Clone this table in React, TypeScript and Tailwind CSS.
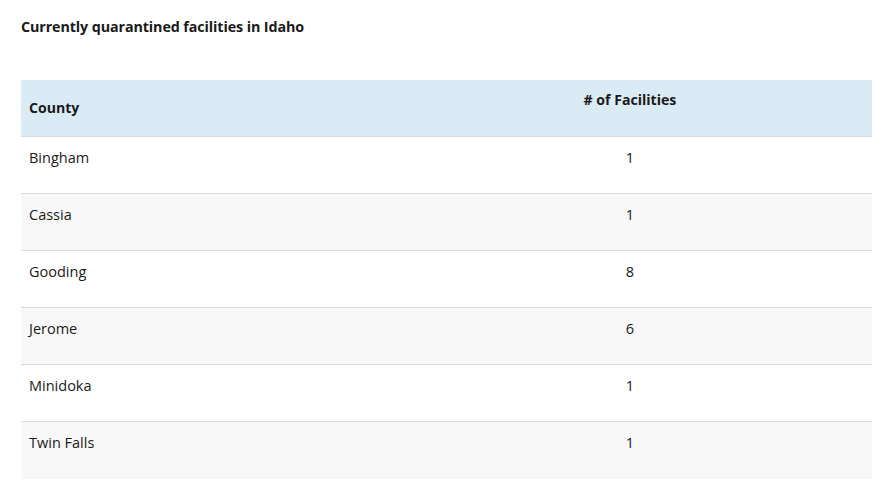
import React from "react";

const rows: [string, string][] = [
  ["Bingham", "1"],
  ["Cassia", "1"],
  ["Gooding", "8"],
  ["Jerome", "6"],
  ["Minidoka", "1"],
  ["Twin Falls", "1"],
];

export default function App() {
  return (
    <div
      className="w-[876px] h-[482px] bg-white text-[#1a1a1a] overflow-hidden"
      style={{ fontFamily: '"Open Sans", "Noto Sans", sans-serif' }}
    >
      <div className="pl-[21px] pr-[4px]">
        <h2 className="pt-[17px] h-[80px] text-[14.3px] font-bold leading-[20px] text-[#1a1a1a] tracking-[-0.1px]">
          Currently quarantined facilities in Idaho
        </h2>
        <div className="flex flex-col">
          <div className="flex h-[57px] bg-[#dbebf5] border-b border-[#dcdcdc] text-[14.1px] font-bold">
            <div className="w-[367px] pl-[8px] flex items-center">County</div>
            <div className="flex-1 text-center pt-[10px] leading-[20px]"># of Facilities</div>
          </div>
          {rows.map(([c, n], i) => (
            <div
              key={c}
              className={`flex h-[57px] text-[14.5px] leading-[20px] ${
                i < rows.length - 1 ? "border-b border-[#dcdcdc]" : ""
              } ${i % 2 === 1 ? "bg-[#f8f8f8]" : "bg-white"}`}
            >
              <div className="w-[367px] pl-[8px] pt-[11px]">{c}</div>
              <div className="flex-1 text-center pt-[11px]">{n}</div>
            </div>
          ))}
        </div>
      </div>
    </div>
  );
}
